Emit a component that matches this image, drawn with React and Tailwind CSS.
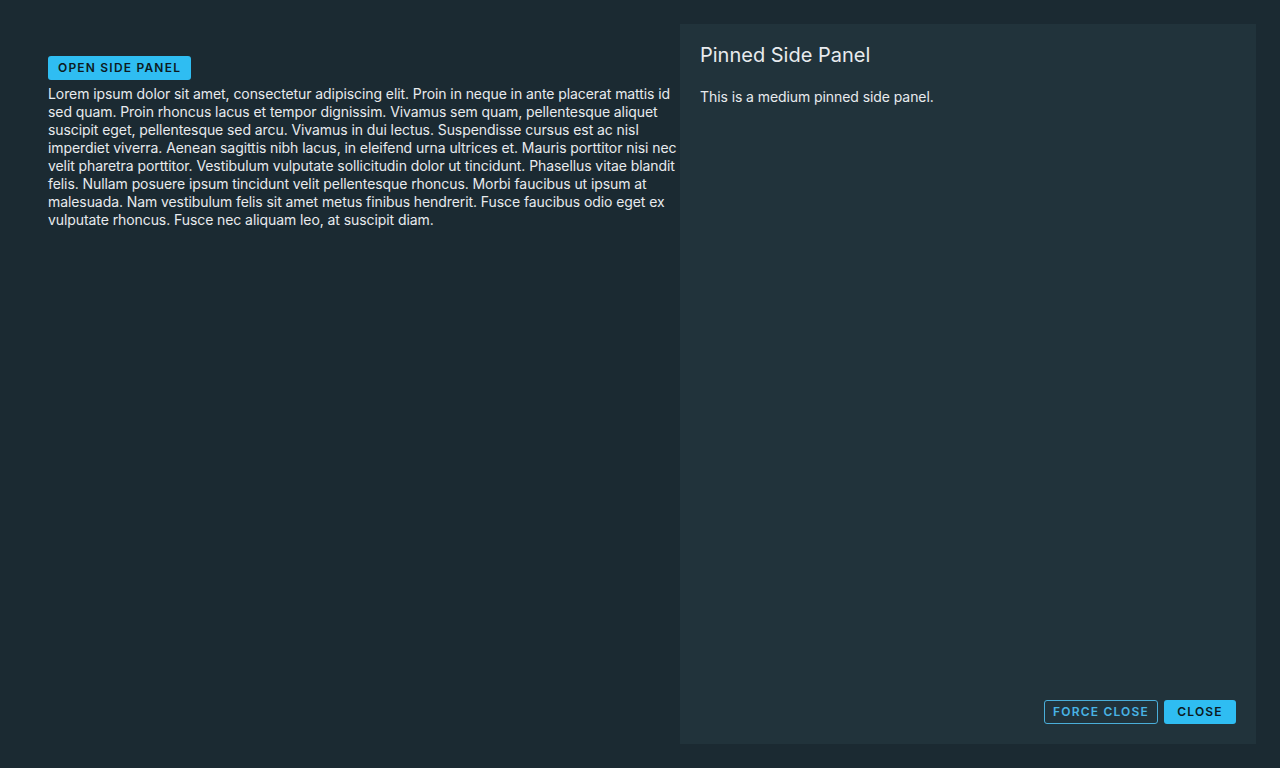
export default function App() {
  const font = { fontFamily: 'Inter, "Noto Sans", sans-serif' };
  return (
    <div className="w-[1280px] h-[768px] bg-[#1b2a32] flex text-[#e8ebee]" style={font}>
      <div className="flex-1 pl-12 pt-[54px] pr-[2px]">
        <button className="h-6 px-[10px] rounded-[3px] bg-[#2fbdf2] text-[#0d1a21] text-[12px] font-semibold tracking-[0.1em] uppercase">
          Open Side Panel
        </button>
        <p className="mt-[5px] text-[14px] leading-[18px] tracking-[-0.08px]">
          Lorem ipsum dolor sit amet, consectetur adipiscing elit. Proin in neque in ante placerat mattis id sed quam. Proin rhoncus lacus et tempor dignissim. Vivamus sem quam, pellentesque aliquet suscipit eget, pellentesque sed arcu. Vivamus in dui lectus. Suspendisse cursus est ac nisl imperdiet viverra. Aenean sagittis nibh lacus, in eleifend urna ultrices et. Mauris porttitor nisi nec velit pharetra porttitor. Vestibulum vulputate sollicitudin dolor ut tincidunt. Phasellus vitae blandit felis. Nullam posuere ipsum tincidunt velit pellentesque rhoncus. Morbi faucibus ut ipsum at malesuada. Nam vestibulum felis sit amet metus finibus hendrerit. Fusce faucibus odio eget ex vulputate rhoncus. Fusce nec aliquam leo, at suscipit diam.
        </p>
      </div>
      <div className="w-[576px] my-6 mr-6 bg-[#21333b] flex flex-col p-5">
        <h2 className="text-[20px] leading-6 font-normal -mt-[1px]">Pinned Side Panel</h2>
        <p className="mt-[21px] text-[14px] leading-[18px] tracking-[-0.08px]">This is a medium pinned side panel.</p>
        <div className="mt-auto flex justify-end gap-[6px]">
          <button className="h-6 px-[8px] rounded-[3px] border border-[#4aaed9] text-[#49b4e5] text-[12px] font-semibold tracking-[0.1em] uppercase">
            Force Close
          </button>
          <button className="h-6 w-[72px] rounded-[3px] bg-[#2fbdf2] text-[#0d1a21] text-[12px] font-semibold tracking-[0.1em] uppercase">
            Close
          </button>
        </div>
      </div>
    </div>
  );
}
